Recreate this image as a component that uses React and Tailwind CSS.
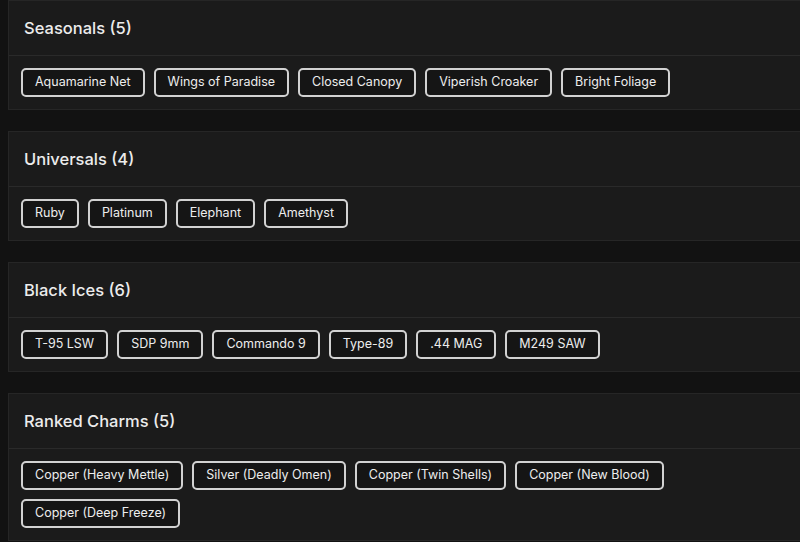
const sections = [
  { title: 'Seasonals', items: ['Aquamarine Net', 'Wings of Paradise', 'Closed Canopy', 'Viperish Croaker', 'Bright Foliage'] },
  { title: 'Universals', items: ['Ruby', 'Platinum', 'Elephant', 'Amethyst'] },
  { title: 'Black Ices', items: ['T-95 LSW', 'SDP 9mm', 'Commando 9', 'Type-89', '.44 MAG', 'M249 SAW'] },
  {
    title: 'Ranked Charms',
    items: ['Copper (Heavy Mettle)', 'Silver (Deadly Omen)', 'Copper (Twin Shells)', 'Copper (New Blood)', 'Copper (Deep Freeze)'],
  },
];

const Chip = ({ label }) => (
  <span className="inline-flex items-center h-[29px] px-[12px] rounded-[5px] border-2 border-[#d2d2d2] bg-[#151515] text-[12.5px] text-[#ededed] leading-none">
    {label}
  </span>
);

export default function App() {
  return (
    <div
      className="h-[542px] w-[800px] overflow-hidden bg-[#121212] pl-2 flex flex-col gap-[21px]"
      style={{ fontFamily: 'Inter, "Noto Sans", sans-serif' }}
    >
      {sections.map((s) => (
        <section key={s.title} className="w-[800px] shrink-0 bg-[#1b1b1b] border border-[#262626]">
          {/* Header */}
          <div className="h-[55px] flex items-center px-[15px] border-b border-[#2a2a2a]">
            <h2 className="text-[16.5px] font-medium text-[#ececec]">
              {s.title} ({s.items.length})
            </h2>
          </div>
          {/* Items */}
          <div className="flex flex-wrap gap-[9px] px-[12px] py-[12px]">
            {s.items.map((item) => (
              <Chip key={item} label={item} />
            ))}
          </div>
        </section>
      ))}
    </div>
  );
}
